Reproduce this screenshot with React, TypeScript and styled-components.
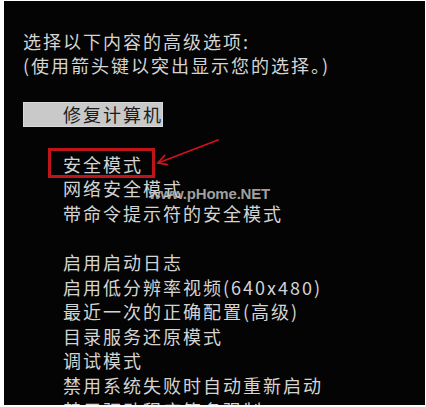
import React from "react";
import styled, { createGlobalStyle } from "styled-components";

const Global = createGlobalStyle`
  html, body { margin: 0; padding: 0; background: #ffffff; }
  #root { width: 426px; height: 407px; }
`;

const LINE = 24.6;

const Frame = styled.div`
  width: 426px;
  height: 407px;
  box-sizing: border-box;
  padding: 1px 1px 2px 4px;
  background: #ffffff;
`;

const Screen = styled.div`
  position: relative;
  height: 100%;
  overflow: hidden;
  background: #040404;
  box-sizing: border-box;
  padding: 27.7px 0 0 19px;
  font-family: "Noto Sans CJK SC", "Noto Sans", sans-serif;
  font-size: 18px;
  letter-spacing: 2px;
  color: #d4d4d4;
`;

const Line = styled.div<{ $indent?: boolean }>`
  position: relative;
  height: ${LINE}px;
  line-height: ${LINE}px;
  white-space: nowrap;
  padding-left: ${(p) => (p.$indent ? 40 : 0)}px;
`;

const Blank = styled.div`
  height: ${LINE}px;
`;

const Bar = styled.div`
  display: inline-block;
  height: 25px;
  line-height: 25px;
  padding: 0 0 0 40px;
  width: 100px;
  background: #c9c9c9;
  color: #1c1c1c;
  box-shadow: inset 0 0 0 1px #d8d8d8;
`;

const SelectBox = styled.div`
  position: absolute;
  left: 25px;
  top: -3.7px;
  width: 107px;
  height: 30px;
  box-sizing: border-box;
  border: 3px solid #c0141b;
`;

const Watermark = styled.div`
  position: absolute;
  left: 145px;
  top: 184px;
  font-family: "Liberation Sans", Arial, sans-serif;
  font-weight: bold;
  font-size: 15px;
  line-height: 18px;
  letter-spacing: -0.2px;
  color: rgba(190, 190, 190, 0.85);
`;

const Arrow = styled.svg`
  position: absolute;
  left: 0;
  top: 0;
  overflow: visible;
`;

const items = ["网络安全模式", "带命令提示符的安全模式"];

const items2 = [
  "启用启动日志",
  "启用低分辨率视频(640x480)",
  "最近一次的正确配置(高级)",
  "目录服务还原模式",
  "调试模式",
  "禁用系统失败时自动重新启动",
  "禁用驱动程序签名强制",
];

export default function App() {
  return (
    <>
      <Global />
      <Frame>
        <Screen>
          <Line>选择以下内容的高级选项:</Line>
          <Line>(使用箭头键以突出显示您的选择。)</Line>
          <Blank />
          <Line>
            <Bar>修复计算机</Bar>
          </Line>
          <Blank />
          <Line $indent>
            安全模式
            <SelectBox />
          </Line>
          {items.map((t) => (
            <Line $indent key={t}>
              {t}
            </Line>
          ))}
          <Blank />
          {items2.map((t) => (
            <Line $indent key={t}>
              {t}
            </Line>
          ))}
          <Watermark>www.pHome.NET</Watermark>
          <Arrow width="426" height="407">
            <g stroke="#d0121b" strokeWidth="1.8" fill="none" strokeLinecap="round">
              <line x1="214" y1="139" x2="154" y2="162" />
              <polyline points="163.5,163.6 154,162 160.5,154.5" />
            </g>
          </Arrow>
        </Screen>
      </Frame>
    </>
  );
}
